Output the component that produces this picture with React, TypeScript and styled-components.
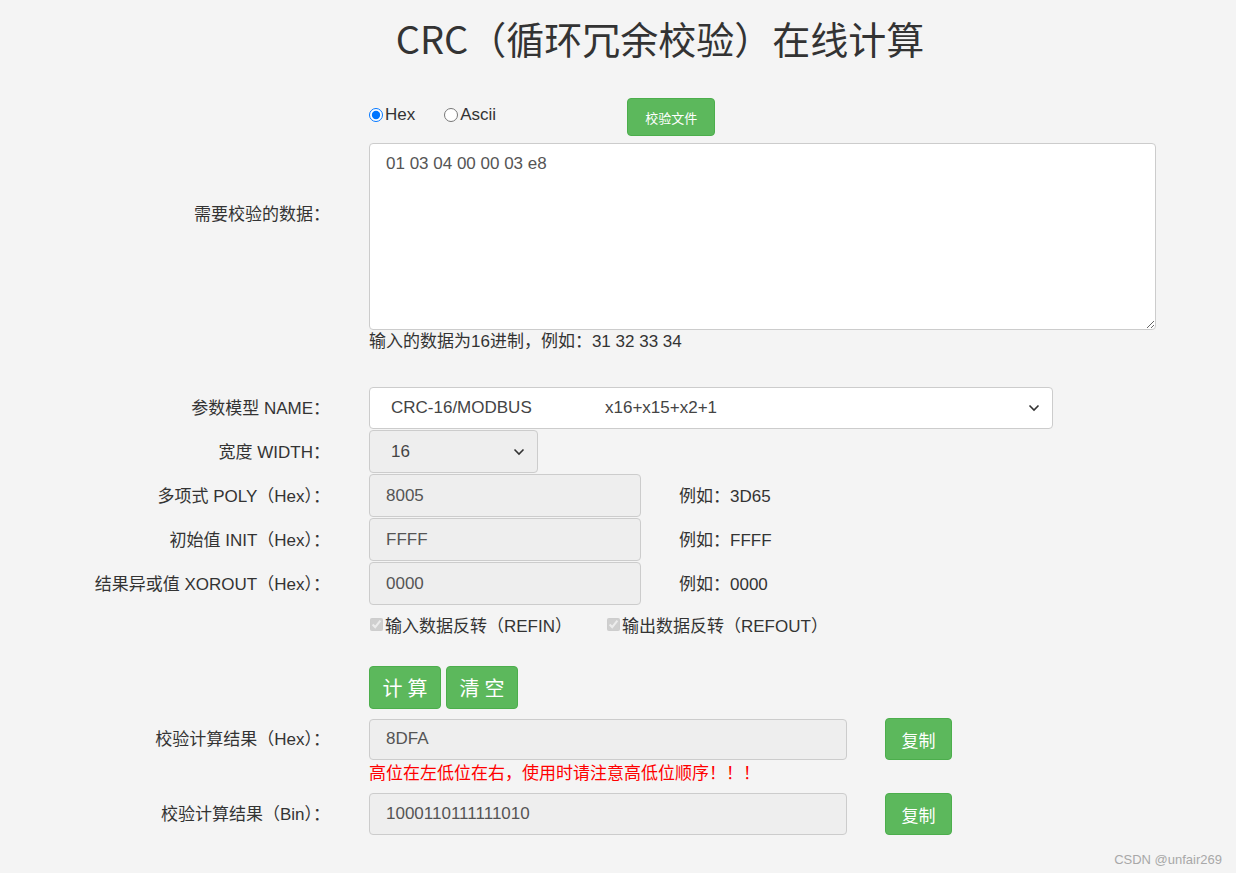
import React from "react";
import styled, { createGlobalStyle } from "styled-components";

const GlobalStyle = createGlobalStyle`
  html, body {
    margin: 0;
    padding: 0;
    background: #f4f4f4;
  }
  body {
    font-family: "Liberation Sans", "Noto Sans CJK SC", sans-serif;
    color: #333;
    font-size: 17px;
  }
  * {
    box-sizing: border-box;
  }
`;

interface ParamType {
  label: string;
  value: string;
  example: string;
}

const params: ParamType[] = [
  { label: "多项式 POLY（Hex）：", value: "8005", example: "例如：3D65" },
  { label: "初始值 INIT（Hex）：", value: "FFFF", example: "例如：FFFF" },
  { label: "结果异或值 XOROUT（Hex）：", value: "0000", example: "例如：0000" },
];

const Chevron = () => (
  <svg width="12" height="8" viewBox="0 0 12 8">
    <path d="M1.5 1.5 L6 6 L10.5 1.5" fill="none" stroke="#333" strokeWidth="1.6" />
  </svg>
);

export default function App() {
  return (
    <>
      <GlobalStyle />
      <Page>
        <Title>CRC（循环冗余校验）在线计算</Title>

        <Row $top={7}>
          <Label>需要校验的数据：</Label>
          <Field>
            <RadioLine>
              <RadioItem>
                <input type="radio" name="mode" defaultChecked />
                Hex
              </RadioItem>
              <RadioItem>
                <input type="radio" name="mode" />
                Ascii
              </RadioItem>
              <FileButton type="button">校验文件</FileButton>
            </RadioLine>
            <DataArea defaultValue="01 03 04 00 00 03 e8" />
          </Field>
        </Row>

        <Row $top={0}>
          <span />
          <Hint>输入的数据为16进制，例如：31 32 33 34</Hint>
        </Row>

        <Row $top={33}>
          <Label>参数模型 NAME：</Label>
          <SelectBox $width={684} $height={42} $gray={false}>
            <SelectText>
              <SelectName>CRC-16/MODBUS</SelectName>
              x16+x15+x2+1
            </SelectText>
            <Chevron />
          </SelectBox>
        </Row>

        <Row $top={1}>
          <Label>宽度 WIDTH：</Label>
          <SelectBox $width={169} $height={43} $gray={true}>
            <SelectText>16</SelectText>
            <Chevron />
          </SelectBox>
        </Row>

        {params.map((p, i) => (
          <Row $top={1} key={i}>
            <Label>{p.label}</Label>
            <Inline>
              <ValueBox $width={272} $height={43}>{p.value}</ValueBox>
              <Example>{p.example}</Example>
            </Inline>
          </Row>
        ))}

        <Row $top={0}>
          <span />
          <CheckLine>
            <CheckItem>
              <input type="checkbox" defaultChecked disabled />
              输入数据反转（REFIN）
            </CheckItem>
            <CheckItem>
              <input type="checkbox" defaultChecked disabled />
              输出数据反转（REFOUT）
            </CheckItem>
          </CheckLine>
        </Row>

        <Row $top={20}>
          <span />
          <ButtonGroup>
            <ActionButton type="button">计算</ActionButton>
            <ActionButton type="button">清空</ActionButton>
          </ButtonGroup>
        </Row>

        <Row $top={9}>
          <Label>校验计算结果（Hex）：</Label>
          <Inline>
            <ValueBox $width={478} $height={41}>8DFA</ValueBox>
            <CopyButton type="button">复制</CopyButton>
          </Inline>
        </Row>

        <Row $top={0}>
          <span />
          <Warning>高位在左低位在右，使用时请注意高低位顺序！！！</Warning>
        </Row>

        <Row $top={3}>
          <Label>校验计算结果（Bin）：</Label>
          <Inline>
            <ValueBox $width={478} $height={42}>1000110111111010</ValueBox>
            <CopyButton type="button">复制</CopyButton>
          </Inline>
        </Row>

        <Watermark>CSDN @unfair269</Watermark>
      </Page>
    </>
  );
}

const Page = styled.div`
  position: relative;
  min-height: 873px;
  padding-bottom: 38px;
`;

const Title = styled.h1`
  margin: 0;
  padding: 10px 0 0 84px;
  height: 90px;
  text-align: center;
  font-family: "Noto Sans CJK SC", sans-serif;
  font-size: 38px;
  font-weight: 400;
  line-height: 56px;
  color: #333;
`;

const Watermark = styled.div`
  position: absolute;
  right: 14px;
  bottom: 6px;
  font-size: 13px;
  color: #a8a8a8;
`;

const Row = styled.div<{ $top: number }>`
  display: grid;
  grid-template-columns: 330px 787px;
  column-gap: 39px;
  align-items: center;
  margin-top: ${(p) => p.$top}px;
`;

const Label = styled.div`
  text-align: right;
  padding-bottom: 3px;
  color: #333;
  font-size: 17px;
`;

const Field = styled.div`
  display: flex;
  flex-direction: column;
`;

const DataArea = styled.textarea`
  margin-top: 6px;
  width: 787px;
  height: 187px;
  padding: 9px 16px;
  border: 1px solid #ccc;
  border-radius: 4px;
  background: #fff;
  font-family: "Liberation Sans", "Noto Sans CJK SC", sans-serif;
  font-size: 17px;
  line-height: 22px;
  color: #555;
  outline: none;
`;

const Hint = styled.div`
  height: 24px;
  line-height: 24px;
  font-size: 17px;
  color: #333;
`;

const Inline = styled.div`
  display: flex;
  align-items: center;
`;

const ValueBox = styled.div<{ $width: number; $height: number }>`
  display: flex;
  align-items: center;
  width: ${(p) => p.$width}px;
  height: ${(p) => p.$height}px;
  padding-left: 16px;
  background: #eee;
  border: 1px solid #ccc;
  border-radius: 4px;
  font-size: 17px;
  color: #555;
`;

const Example = styled.span`
  margin-left: 38px;
  padding-bottom: 3px;
  font-size: 17px;
  color: #333;
`;

const Warning = styled.div`
  height: 30px;
  line-height: 28px;
  font-size: 17px;
  color: #ff0000;
`;

const RadioLine = styled.div`
  display: flex;
  align-items: center;
  height: 40px;
`;

const RadioItem = styled.label`
  display: flex;
  align-items: center;
  margin-right: 29px;
  margin-top: -5px;
  font-size: 17px;
  color: #333;

  input {
    margin: 0 2px 0 0;
    width: 14px;
    height: 14px;
  }
`;

const CheckLine = styled.div`
  display: flex;
  align-items: center;
  height: 41px;
  gap: 34px;
  padding-bottom: 2px;
`;

const CheckItem = styled.label`
  display: flex;
  align-items: center;
  font-size: 17px;
  color: #333;

  input {
    margin: 0 2px 0 1px;
    width: 13px;
    height: 13px;
  }
`;

const SelectBox = styled.div<{ $width: number; $height: number; $gray: boolean }>`
  display: flex;
  align-items: center;
  justify-content: space-between;
  width: ${(p) => p.$width}px;
  height: ${(p) => p.$height}px;
  padding: 0 12px 0 21px;
  background: ${(p) => (p.$gray ? "#eee" : "#fff")};
  border: 1px solid #ccc;
  border-radius: 4px;
`;

const SelectText = styled.span`
  font-size: 17px;
  color: #444;
`;

const SelectName = styled.span`
  display: inline-block;
  width: 214px;
`;

const GreenButton = styled.button`
  border: 1px solid #4cae4c;
  border-radius: 4px;
  background: #5cb85c;
  color: #fff;
  font-family: "Noto Sans CJK SC", sans-serif;
  padding: 0;
`;

const FileButton = styled(GreenButton)`
  margin-left: 102px;
  width: 88px;
  height: 38px;
  font-size: 13px;
`;

const ButtonGroup = styled.div`
  display: flex;
  gap: 5px;
`;

const ActionButton = styled(GreenButton)`
  width: 72px;
  height: 43px;
  font-size: 20px;
  letter-spacing: 5px;
  padding-left: 5px;
`;

const CopyButton = styled(GreenButton)`
  margin-left: 38px;
  width: 67px;
  height: 42px;
  font-size: 17px;
`;
